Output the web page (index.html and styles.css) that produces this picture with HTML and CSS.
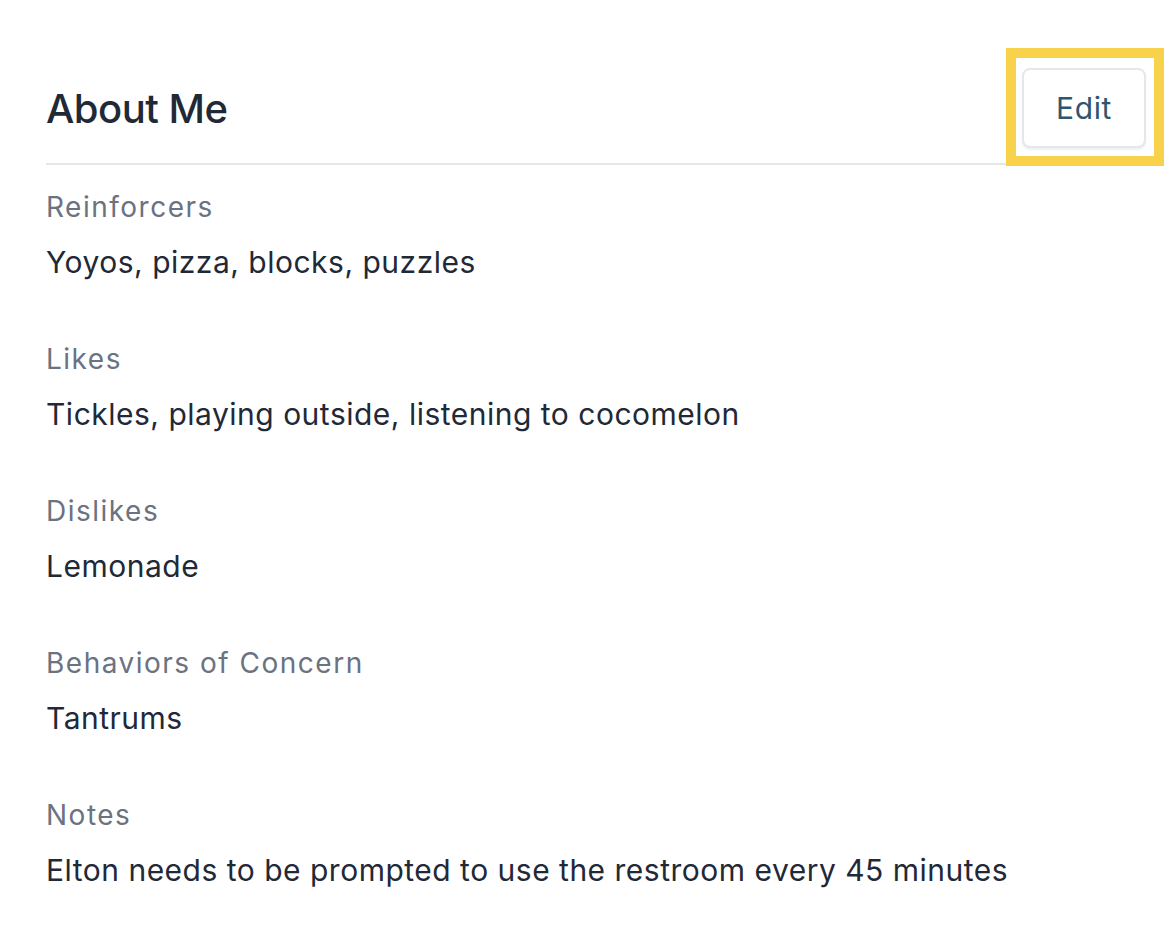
FILE: index.html
```html
<!DOCTYPE html>
<html lang="en">
	<head>
		<meta charset="UTF-8">
		<title>About Me</title>
		<link rel="stylesheet" href="styles.css">
	</head>
	<body>
		<div class="panel">
			<div class="panel-header">
				<h1 class="panel-title">About Me</h1>
				<button class="edit-btn" type="button">Edit</button>
			</div>

			<dl class="facts">
				<div class="fact">
					<dt>Reinforcers</dt>
					<dd>Yoyos, pizza, blocks, puzzles</dd>
				</div>
				<div class="fact">
					<dt>Likes</dt>
					<dd>Tickles, playing outside, listening to cocomelon</dd>
				</div>
				<div class="fact">
					<dt>Dislikes</dt>
					<dd>Lemonade</dd>
				</div>
				<div class="fact">
					<dt>Behaviors of Concern</dt>
					<dd>Tantrums</dd>
				</div>
				<div class="fact">
					<dt>Notes</dt>
					<dd>Elton needs to be prompted to use the restroom every 45 minutes</dd>
				</div>
			</dl>
		</div>
	</body>
</html>
```

FILE: styles.css
```css
body {
	margin: 0;
	background: #fff;
	font-family: Inter, "Noto Sans", sans-serif;
	color: #1f2937;
}

.panel {
	padding: 0 18px 0 46px;
}

.panel-header {
	display: flex;
	align-items: center;
	justify-content: space-between;
	padding: 68px 0 15px;
	border-bottom: 2px solid #e5e7eb;
}

.panel-title {
	margin: 0;
	font-size: 40px;
	font-weight: 500;
	color: #1f2937;
	letter-spacing: -0.5px;
}

.edit-btn {
	position: relative;
	width: 124px;
	height: 80px;
	border: 2px solid #e5e7eb;
	border-radius: 8px;
	background: #fff;
	box-shadow: 0 2px 2px rgba(0, 0, 0, 0.06);
	font-family: inherit;
	font-size: 30px;
	letter-spacing: 0.6px;
	color: #2f5670;
	cursor: pointer;
}

/* highlight box drawn over the button */
.edit-btn::after {
	content: "";
	position: absolute;
	top: -22px;
	left: -18px;
	right: -20px;
	bottom: -20px;
	border: 10px solid #f8d24a;
	pointer-events: none;
}

.facts {
	margin: 0;
	padding-top: 22px;
}

.fact {
	margin-bottom: 53px;
}

.fact dt {
	font-size: 28px;
	line-height: 40px;
	letter-spacing: 1.5px;
	color: #6b7280;
	margin-bottom: 11px;
}

.fact dd {
	margin: 0;
	font-size: 30px;
	line-height: 48px;
	letter-spacing: 0.5px;
	color: #1f2937;
}
```
